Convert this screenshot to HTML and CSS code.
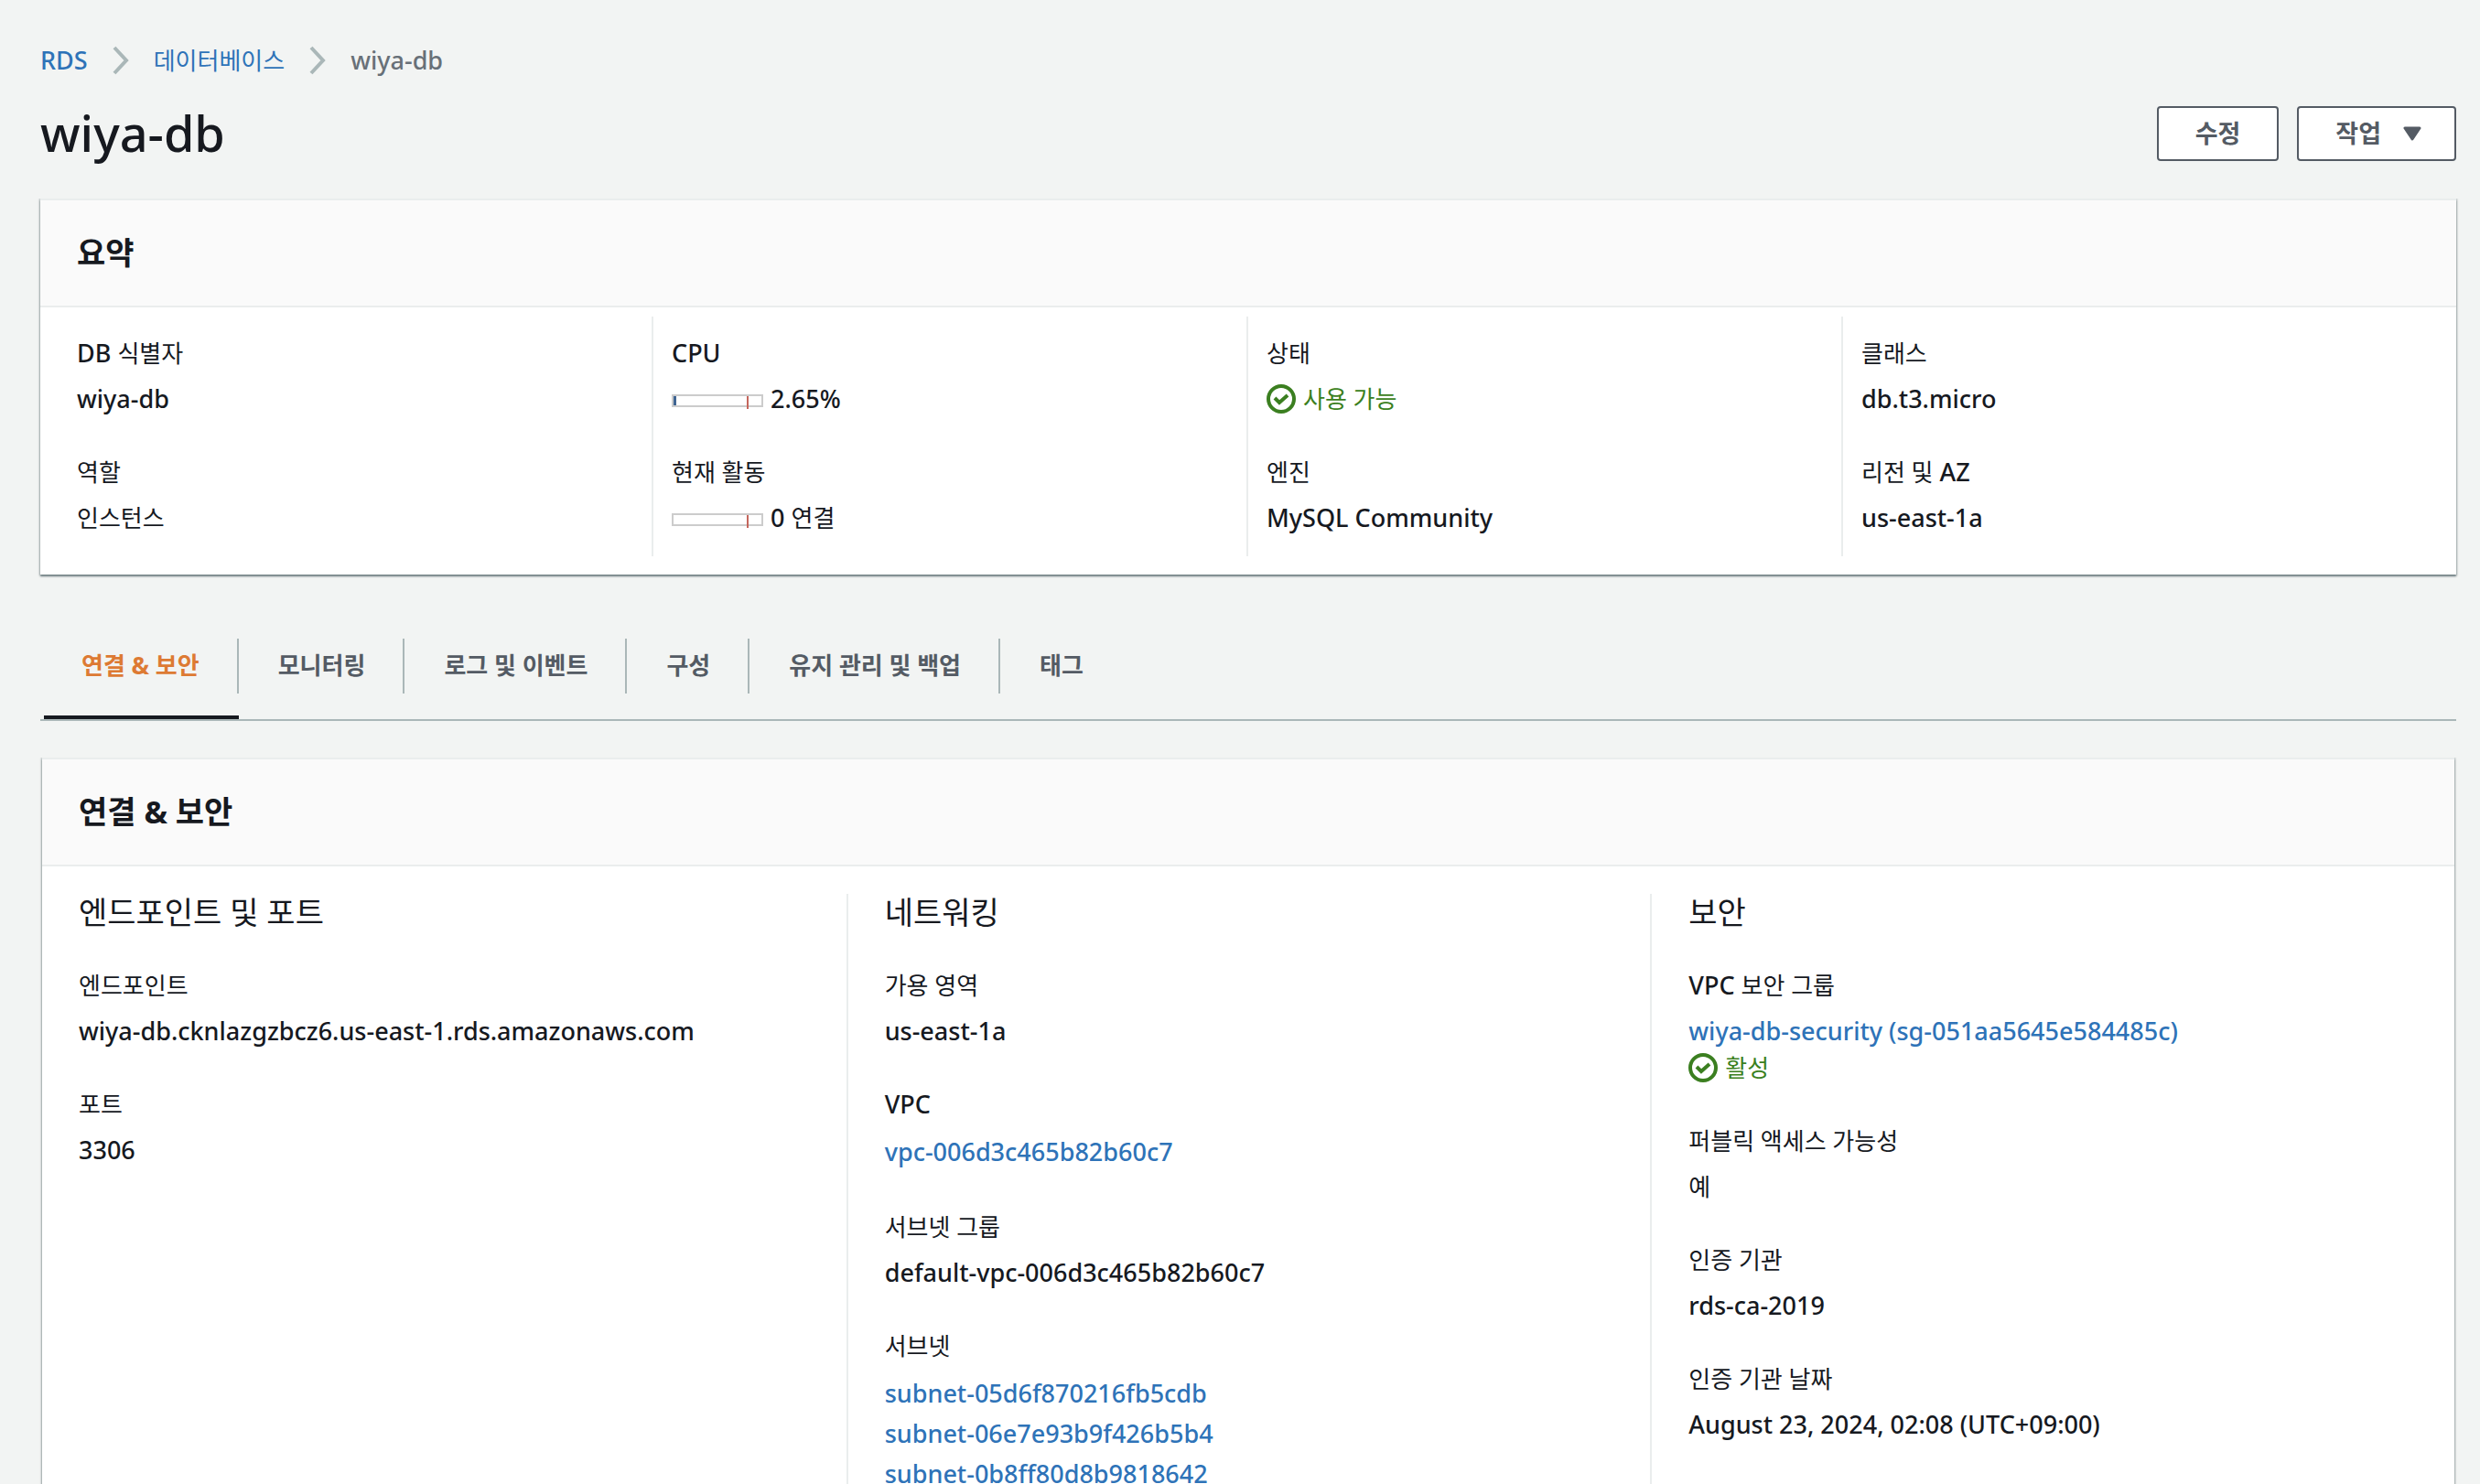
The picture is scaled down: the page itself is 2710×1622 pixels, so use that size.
FILE: index.html
```html
<!DOCTYPE html>
<html lang="ko">
<head>
    <meta charset="UTF-8">
    <title>wiya-db</title>
    <link rel="stylesheet" href="styles.css">
</head>
<body>
<main class="page">
    <nav class="crumbs">
        <a href="#">RDS</a>
        <svg class="arrow" viewBox="0 0 20 32"><path d="M3 2l13 14L3 30"/></svg>
        <a href="#" class="ko">데이터베이스</a>
        <svg class="arrow" viewBox="0 0 20 32"><path d="M3 2l13 14L3 30"/></svg>
        <span>wiya-db</span>
    </nav>
    <header class="top">
        <h1>wiya-db</h1>
        <div class="actions">
            <button type="button" class="btn">수정</button>
            <button type="button" class="btn">작업
                <svg class="caret" viewBox="0 0 20 16"><path d="M2 2h16l-8 12z"/></svg>
            </button>
        </div>
    </header>

    <section class="card">
        <div class="card-head"><h2>요약</h2></div>
        <div class="summary">
            <dl class="col">
                <div class="pair">
                    <dt>DB <span class="ko">식별자</span></dt>
                    <dd>wiya-db</dd>
                </div>
                <div class="pair">
                    <dt class="ko">역할</dt>
                    <dd class="ko">인스턴스</dd>
                </div>
            </dl>
            <dl class="col">
                <div class="pair">
                    <dt>CPU</dt>
                    <dd class="usage">
                        <span class="bar"><span class="fill" style="width: 2.65%"></span><span class="limit"></span></span>
                        <span>2.65%</span>
                    </dd>
                </div>
                <div class="pair">
                    <dt class="ko">현재 활동</dt>
                    <dd class="usage">
                        <span class="bar"><span class="fill" style="width: 0%"></span><span class="limit"></span></span>
                        <span>0 <span class="ko">연결</span></span>
                    </dd>
                </div>
            </dl>
            <dl class="col">
                <div class="pair">
                    <dt class="ko">상태</dt>
                    <dd class="status">
                        <svg class="check" viewBox="0 0 32 32"><circle cx="16" cy="16" r="14"/><path d="M9 15l5 5 9-8"/></svg>
                        <span class="ko">사용 가능</span>
                    </dd>
                </div>
                <div class="pair">
                    <dt class="ko">엔진</dt>
                    <dd>MySQL Community</dd>
                </div>
            </dl>
            <dl class="col">
                <div class="pair">
                    <dt class="ko">클래스</dt>
                    <dd>db.t3.micro</dd>
                </div>
                <div class="pair">
                    <dt><span class="ko">리전 및</span> AZ</dt>
                    <dd>us-east-1a</dd>
                </div>
            </dl>
        </div>
    </section>

    <div class="tabs" role="tablist">
        <button type="button" role="tab" aria-selected="true" class="tab on"><span>연결 &amp; 보안</span></button>
        <button type="button" role="tab" class="tab"><span>모니터링</span></button>
        <button type="button" role="tab" class="tab"><span>로그 및 이벤트</span></button>
        <button type="button" role="tab" class="tab"><span>구성</span></button>
        <button type="button" role="tab" class="tab"><span>유지 관리 및 백업</span></button>
        <button type="button" role="tab" class="tab"><span>태그</span></button>
    </div>

    <section class="card inset">
        <div class="card-head"><h2>연결 &amp; 보안</h2></div>
        <div class="detail">
            <div class="col">
                <h3>엔드포인트 및 포트</h3>
                <dl>
                    <div class="pair">
                        <dt class="ko">엔드포인트</dt>
                        <dd>wiya-db.cknlazgzbcz6.us-east-1.rds.amazonaws.com</dd>
                    </div>
                    <div class="pair">
                        <dt class="ko">포트</dt>
                        <dd>3306</dd>
                    </div>
                </dl>
            </div>
            <div class="col">
                <h3>네트워킹</h3>
                <dl>
                    <div class="pair">
                        <dt class="ko">가용 영역</dt>
                        <dd>us-east-1a</dd>
                    </div>
                    <div class="pair">
                        <dt>VPC</dt>
                        <dd class="links"><a href="#">vpc-006d3c465b82b60c7</a></dd>
                    </div>
                    <div class="pair">
                        <dt class="ko">서브넷 그룹</dt>
                        <dd>default-vpc-006d3c465b82b60c7</dd>
                    </div>
                    <div class="pair">
                        <dt class="ko">서브넷</dt>
                        <dd class="links">
                            <a href="#">subnet-05d6f870216fb5cdb</a>
                            <a href="#">subnet-06e7e93b9f426b5b4</a>
                            <a href="#">subnet-0b8ff80d8b9818642</a>
                        </dd>
                    </div>
                </dl>
            </div>
            <div class="col">
                <h3>보안</h3>
                <dl>
                    <div class="pair">
                        <dt>VPC <span class="ko">보안 그룹</span></dt>
                        <dd><a href="#">wiya-db-security (sg-051aa5645e584485c)</a></dd>
                        <dd class="status">
                            <svg class="check" viewBox="0 0 32 32"><circle cx="16" cy="16" r="14"/><path d="M9 15l5 5 9-8"/></svg>
                            <span class="ko">활성</span>
                        </dd>
                    </div>
                    <div class="pair">
                        <dt class="ko">퍼블릭 액세스 가능성</dt>
                        <dd class="ko">예</dd>
                    </div>
                    <div class="pair">
                        <dt class="ko">인증 기관</dt>
                        <dd>rds-ca-2019</dd>
                    </div>
                    <div class="pair">
                        <dt class="ko">인증 기관 날짜</dt>
                        <dd>August 23, 2024, 02:08 (UTC+09:00)</dd>
                    </div>
                </dl>
            </div>
        </div>
    </section>
</main>
</body>
</html>
```
FILE: styles.css
```css
* {
    margin: 0;
    padding: 0;
    box-sizing: border-box;
}

body {
    background: #f2f4f3;
    color: #16191f;
    font: 500 27px/40px "Noto Sans", "Noto Sans CJK KR", sans-serif;
}

button {
    font: inherit;
    cursor: pointer;
}

a {
    color: #2e73b8;
    text-decoration: none;
}

.ko {
    font-size: 26px;
    font-weight: 400;
}

.page {
    height: 100vh;
    overflow: hidden;
    padding: 46px 26px 0 44px;
}

.crumbs {
    display: flex;
    align-items: center;
    gap: 26px;
    color: #687078;
}

.arrow {
    width: 20px;
    height: 32px;
    fill: none;
    stroke: #aab7b8;
    stroke-width: 4;
}

.top {
    display: flex;
    justify-content: space-between;
    align-items: center;
    height: 60px;
    margin: 30px 0 41px;
}

h1 {
    padding-bottom: 2px;
    font-size: 54px;
    font-weight: 500;
    line-height: 60px;
}

h2, h3 {
    font-size: 34px;
    line-height: 44px;
}

h3 {
    margin-top: -2px;
    font-weight: 400;
}

.actions {
    display: flex;
    gap: 20px;
}

.btn {
    display: flex;
    align-items: center;
    gap: 24px;
    height: 60px;
    padding: 0 40px;
    border: 2px solid #545b64;
    border-radius: 4px;
    background: #fff;
    color: #545b64;
    font-weight: 700;
}

.caret {
    width: 20px;
    height: 16px;
    margin-right: -4px;
    fill: #545b64;
    stroke: #545b64;
    stroke-width: 3;
    stroke-linejoin: round;
}

/* cards */
.card {
    background: #fff;
    border-top: 2px solid #eaeded;
    box-shadow: 0 2px 2px rgba(0, 28, 36, 0.5), 0 0 2px 1px rgba(0, 28, 36, 0.2);
    clip-path: inset(0 -4px -6px -4px);
}

.card-head {
    display: flex;
    align-items: center;
    height: 117px;
    padding: 0 40px 2px;
    border-bottom: 2px solid #eaeded;
    background: #fafafa;
}

.inset {
    margin: 40px 2px 0;
}

.summary {
    display: grid;
    grid-template-columns: repeat(4, 1fr);
    padding: 10px 20px 20px;
}

.summary .col {
    padding: 20px 20px 22px;
    border-right: 2px solid #eaeded;
}

.summary .col:last-child {
    border-right: 0;
}

.detail {
    display: grid;
    grid-template-columns: repeat(3, 1fr);
    padding: 30px 0;
}

.detail .col {
    padding: 0 40px;
}

.detail .col + .col {
    border-left: 2px solid #eaeded;
}

.detail dl {
    margin-top: 38px;
}

.pair + .pair {
    margin-top: 40px;
}

dt {
    margin-bottom: 10px;
}

.links a {
    display: block;
    line-height: 44px;
}

.status, .usage {
    display: flex;
    align-items: center;
    gap: 8px;
}

.status {
    color: #3b7f20;
}

.check {
    width: 32px;
    height: 32px;
    fill: none;
    stroke: #3b7f20;
    stroke-width: 4;
}

/* usage bar with the alarm limit over it */
.bar {
    position: relative;
    width: 100px;
    height: 14px;
    margin-top: 4px;
    border: 2px solid #ccc;
}

.fill {
    display: block;
    height: 10px;
    background: #3f6593;
}

.limit {
    position: absolute;
    left: 80px;
    top: 0;
    width: 2px;
    height: 14px;
    background: #c5665c;
}

/* tabs */
.tabs {
    display: flex;
    gap: 2px;
    margin-top: 70px;
    padding-left: 4px;
    border-bottom: 2px solid #aab7b8;
}

.tab {
    height: 88px;
    padding-bottom: 24px;
    border: 0;
    border-bottom: 4px solid transparent;
    background: none;
    color: #545b64;
    font-size: 26px;
    font-weight: 700;
}

.tab span {
    display: block;
    padding: 0 41px 2px;
    line-height: 58px;
    border-right: 2px solid #aab7b8;
}

.tab:last-child span {
    border-right: 0;
}

.on {
    border-bottom-color: #16191f;
    color: #dd7a33;
}
```
